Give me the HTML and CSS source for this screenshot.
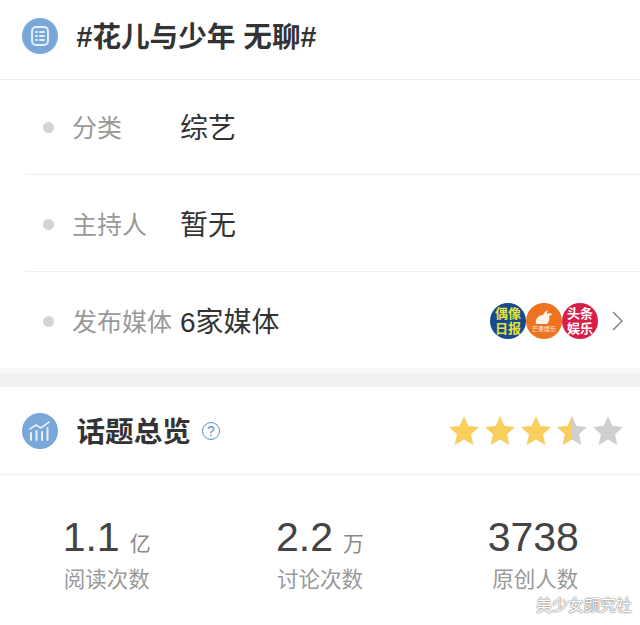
FILE: index.html
```html
<!DOCTYPE html>
<html lang="zh-CN">
<head>
  <meta charset="UTF-8">
  <title>话题总览</title>
  <link rel="stylesheet" href="styles.css">
</head>
<body>
  <div class="head head-top">
    <span class="head-icon">
      <svg width="20" height="22" viewBox="0 0 20 22" fill="none" stroke="#e4f0fb" stroke-width="2" stroke-linecap="round">
        <rect x="2" y="2" width="16" height="18" rx="4"/>
        <path d="M6 7h1M10 7h4M6 11h1M10 11h4M6 15h1M10 15h4"/>
      </svg>
    </span>
    <span class="head-title">#花儿与少年 无聊#</span>
  </div>

  <div class="rows">
    <div class="row">
      <i class="dot"></i>
      <span class="label">分类</span>
      <span class="value">综艺</span>
    </div>
    <div class="row">
      <i class="dot"></i>
      <span class="label">主持人</span>
      <span class="value">暂无</span>
    </div>
    <div class="row">
      <i class="dot"></i>
      <span class="label">发布媒体</span>
      <span class="value">6家媒体</span>
      <div class="logos">
        <span class="logo logo-blue">偶像<br>日报</span>
        <span class="logo logo-orange">
          <svg width="20" height="16" viewBox="0 0 20 16" fill="#fff3e6">
            <path d="M2 15C1 10 4 6 9 6c1-2 2-4 5-5-1 2-1 3-1 4 2-1 4-1 5 0-1 1-2 2-3 2 1 3 0 6-2 8z"/>
          </svg>
          <em>芒果娱乐</em>
        </span>
        <span class="logo logo-red">头条<br>娱乐</span>
      </div>
      <svg class="chevron" width="13" height="22" viewBox="0 0 13 22" fill="none" stroke="#777" stroke-width="1.3">
        <path d="M2 2l9 9-9 9"/>
      </svg>
    </div>
  </div>

  <div class="band"></div>

  <div class="head head-overview">
    <span class="head-icon">
      <svg width="24" height="22" viewBox="0 0 24 22" fill="none" stroke="#e4f0fb" stroke-width="2" stroke-linecap="round">
        <path d="M3 20v-7M8.500 20v-9M14 20v-8M19.500 20V8"/>
        <path d="M2 9l6-4 5 3 8-6" stroke-width="1.600"/>
      </svg>
    </span>
    <span class="head-title">话题总览</span>
    <span class="help">?</span>
    <div class="stars">
      <svg width="176" height="32" viewBox="0 0 176 32">
        <defs>
          <path id="star" d="M16 1l4.400 10 10.600 1-8 7.200 2.400 10.800L16 24.400 6.600 30 9 19.200 1 12l10.600-1z"/>
          <clipPath id="half"><rect x="0" y="0" width="16" height="32"/></clipPath>
        </defs>
        <use href="#star" fill="#f8cf5c"/>
        <use href="#star" x="36" fill="#f8cf5c"/>
        <use href="#star" x="72" fill="#f8cf5c"/>
        <use href="#star" x="108" fill="#cfcfcf"/>
        <g transform="translate(108 0)"><use href="#star" fill="#f8cf5c" clip-path="url(#half)"/></g>
        <use href="#star" x="144" fill="#cfcfcf"/>
      </svg>
    </div>
  </div>

  <div class="stats">
    <div class="stat">
      <div class="stat-num">1.1<small>亿</small></div>
      <div class="stat-name">阅读次数</div>
    </div>
    <div class="stat">
      <div class="stat-num">2.2<small>万</small></div>
      <div class="stat-name">讨论次数</div>
    </div>
    <div class="stat">
      <div class="stat-num">3738</div>
      <div class="stat-name">原创人数</div>
    </div>
  </div>

  <div class="watermark">美少女颜究社</div>
</body>
</html>
```

FILE: styles.css
```css
html, body {
  margin: 0;
  padding: 0;
}
body {
  width: 640px;
  height: 625px;
  overflow: hidden;
  position: relative;
  background-color: #fff;
  color: #333;
  font-family: "Liberation Sans", "Noto Sans CJK SC", sans-serif;
}

.head {
  display: flex;
  align-items: center;
  padding-left: 22px;
  box-sizing: border-box;
  border-bottom: 1px solid #ececec;
}
.head-top {
  height: 80px;
  padding-bottom: 8px;
}
.head-overview {
  height: 88px;
}
.head-icon {
  width: 36px;
  height: 36px;
  border-radius: 50%;
  background-color: #7aa7da;
  display: flex;
  align-items: center;
  justify-content: center;
  margin-right: 18.500px;
  flex-shrink: 0;
}
.head-title {
  font-size: 28.600px;
  font-weight: bold;
  color: #333;
  padding-bottom: 3px;
}
.help {
  width: 16px;
  height: 16px;
  border: 1.500px solid #5b93b8;
  border-radius: 50%;
  margin-left: 11px;
  color: #5b93b8;
  font-size: 14px;
  line-height: 16px;
  text-align: center;
}
.stars {
  margin-left: auto;
  margin-right: 16px;
  height: 32px;
}

.rows {
  margin-left: 25px;
}
.row {
  height: 95px;
  box-sizing: border-box;
  display: flex;
  align-items: center;
  border-bottom: 1px solid #efefef;
  padding-right: 16px;
}
.row:nth-child(2) {
  height: 97px;
  padding-top: 2px;
}
.row:last-child {
  height: 96px;
  padding-top: 2px;
  border-bottom: 0;
}
.dot {
  width: 11px;
  height: 11px;
  border-radius: 50%;
  background-color: #d4d4d4;
  margin-left: 18px;
  margin-right: 18px;
}
.label {
  width: 108px;
  font-size: 25px;
  color: #999;
  white-space: nowrap;
  padding-bottom: 3px;
}
.value {
  font-size: 28px;
  color: #333;
  padding-bottom: 3px;
}
.logos {
  margin-left: auto;
  display: flex;
}
.logo {
  width: 36px;
  height: 36px;
  border-radius: 50%;
  display: flex;
  flex-direction: column;
  align-items: center;
  justify-content: center;
  text-align: center;
  font-size: 13px;
  line-height: 15px;
  font-weight: bold;
  overflow: hidden;
}
.logo-blue {
  display: block;
  padding-top: 3px;
  height: 33px;
  background-color: #17498f;
  color: #e3e23c;
}
.logo-orange {
  background-color: #ee7320;
}
.logo-orange em {
  font-style: normal;
  font-weight: normal;
  font-size: 6px;
  line-height: 8px;
  color: #ffe6d0;
}
.logo-red {
  display: block;
  padding-top: 3px;
  height: 33px;
  background-color: #d81e47;
  color: #fff;
}
.chevron {
  margin-left: 13px;
}

.band {
  height: 14px;
  background-color: #f1f1f1;
  border-top: 5px solid #f8f8f8;
}

.stats {
  display: grid;
  grid-template-columns: repeat(3, 1fr);
  padding-top: 39px;
}
.stat {
  text-align: center;
}
.stat-num {
  font-size: 41px;
  line-height: 46px;
  color: #444;
}
.stat-num small {
  font-size: 21px;
  line-height: 0;
  color: #888;
  margin-left: 10px;
}
.stat-name {
  font-size: 21.500px;
  line-height: 34px;
  margin-top: 3px;
  color: #999;
}
.stat:last-child .stat-name {
  padding-left: 4px;
}

.watermark {
  position: absolute;
  right: 8px;
  bottom: 9px;
  font-size: 16px;
  color: #fff;
  text-shadow: 0 0 2px #777, 0 0 1px #555;
}
```
